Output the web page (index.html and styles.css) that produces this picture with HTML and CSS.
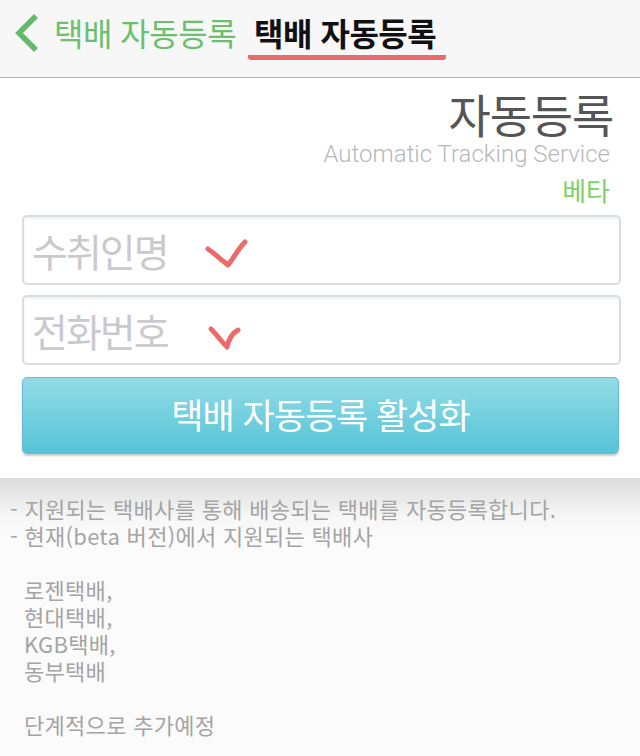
FILE: index.html
```html
<!DOCTYPE html>
<html lang="ko">
<head>
<meta charset="utf-8">
<title>택배 자동등록</title>
<link rel="stylesheet" href="styles.css">
</head>
<body>
<header class="topbar">
  <svg class="back" width="28" height="40" viewBox="0 0 28 40"><path d="M23 3 L6 20 L23 37" fill="none" stroke="#64b96a" stroke-width="5.5"/></svg>
  <span class="back-title">택배 자동등록</span>
  <span class="cur-title">택배 자동등록</span>
</header>
<main class="card">
  <div class="hero">
    <div class="hero-title">자동등록</div>
    <div class="hero-sub">Automatic Tracking Service</div>
    <div class="hero-beta">베타</div>
  </div>
  <div class="field">
    <span class="ph">수취인명</span>
    <svg class="check c1" width="50" height="34" viewBox="0 0 50 34"><path d="M4 12 C10 16 15 21 24 28 C29 22 34 12 41 5" fill="none" stroke="#ec6a6a" stroke-width="5" stroke-linecap="round" stroke-linejoin="round"/></svg>
  </div>
  <div class="field">
    <span class="ph">전화번호</span>
    <svg class="check c2" width="44" height="34" viewBox="0 0 44 34"><path d="M5 9 C11 15 15 21 21 27 C22 22 25 14 32 10" fill="none" stroke="#ec6a6a" stroke-width="5" stroke-linecap="round" stroke-linejoin="round"/></svg>
  </div>
  <button class="activate">택배 자동등록 활성화</button>
</main>
<section class="info">
  <p class="line">- 지원되는 택배사를 통해 배송되는 택배를 자동등록합니다.</p>
  <p class="line">- 현재(beta 버전)에서 지원되는 택배사</p>
  <p class="line blank">&nbsp;</p>
  <p class="line ind">로젠택배,</p>
  <p class="line ind">현대택배,</p>
  <p class="line ind">KGB택배,</p>
  <p class="line ind">동부택배</p>
  <p class="line blank">&nbsp;</p>
  <p class="line ind">단계적으로 추가예정</p>
</section>
</body>
</html>
```
FILE: styles.css
```css
* { box-sizing: border-box; }
html, body { margin: 0; padding: 0; }
body {
  width: 640px;
  height: 756px;
  overflow: hidden;
  background: #fbfbfb;
  font-family: "Noto Sans CJK KR", "Noto Sans", sans-serif;
}
.topbar {
  height: 78px;
  background: #f7f7f7;
  border-bottom: 1px solid #b4b4b4;
  display: flex;
  align-items: flex-start;
  padding: 13px 0 0 13px;
}
.back { flex: none; }
.back-title {
  margin-left: 13px;
  font-size: 32px;
  line-height: 38px;
  color: #6bbf6f;
  letter-spacing: -0.5px;
}
.cur-title {
  margin-left: 12px;
  font-size: 32px;
  line-height: 38px;
  font-weight: 700;
  color: #111;
  letter-spacing: -0.5px;
  padding: 0 10px 4px 6px;
  border-bottom: 5px solid #ea6b6d;
  border-radius: 0 0 3px 3px;
}
.card {
  background: #fff;
  padding: 10px 19px 24px 22px;
  height: 400px;
}
.hero { text-align: right; padding-right: 8px; margin-bottom: 8px; }
.hero-title {
  font-size: 46px;
  line-height: 50px;
  color: #555;
  letter-spacing: -1.2px;
}
.hero-sub {
  font-family: Roboto, "Liberation Sans", sans-serif;
  font-weight: 300;
  font-size: 24px;
  line-height: 28px;
  color: #b8b8b8;
  margin-top: 2px;
  margin-right: 3px;
}
.hero-beta {
  font-size: 26px;
  line-height: 34px;
  color: #7fd16a;
  margin-top: 5px;
  margin-right: 3px;
}
.field {
  height: 70px;
  border: 2px solid #dcdcdc;
  border-radius: 5px;
  display: flex;
  align-items: center;
  padding-left: 8px;
  margin-bottom: 10px;
  box-shadow: inset 0 2px 2px rgba(200,225,235,0.4);
}
.ph {
  font-size: 39px;
  line-height: 40px;
  color: #cacace;
  letter-spacing: -2px;
}
.check { flex: none; }
.c1 { margin-left: 36px; margin-top: 8px; }
.c2 { margin-left: 38px; margin-top: 14px; }
.activate {
  display: block;
  width: 597px;
  height: 77px;
  margin-top: 12px;
  border: 1px solid #69b6d9;
  border-radius: 5px;
  background: linear-gradient(#93dce6, #55c3d7);
  box-shadow: 0 2px 2px rgba(0,0,0,0.2);
  color: #fff;
  font-family: "Noto Sans CJK KR", sans-serif;
  font-size: 35px;
  letter-spacing: -1px;
  padding: 0 0 4px;
}
.info {
  background: linear-gradient(#dcdcdc 0px, #f7f7f7 40px, #fbfbfb 60px);
  padding: 17px 0 0 10px;
  height: 278px;
}
.line {
  margin: 0;
  font-size: 22px;
  line-height: 27px;
  height: 27px;
  color: #a4a4a4;
  letter-spacing: 0.3px;
  white-space: nowrap;
}
.ind { padding-left: 14px; }
```
